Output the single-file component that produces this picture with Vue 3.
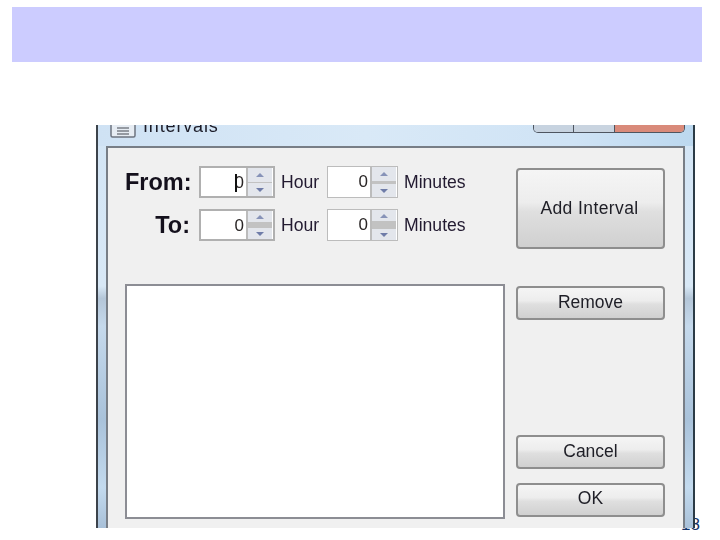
<script setup>
const rows = [
  { label: 'From:', focused: true },
  { label: 'To:', focused: false },
]
</script>

<template>
  <div class="slide">
    <div class="banner"></div>
    <span class="page-no">18</span>
    <div class="window">
      <div class="titlebar">
        <div class="title-left">
          <svg class="app-icon" width="26" height="13" viewBox="0 0 26 13">
            <path d="M1 0V10.5Q1 12 2.5 12H23.5Q25 12 25 10.5V0" fill="#e6ecf3" stroke="#6d7480" stroke-width="1.5"/>
            <path d="M7 3H19M7 6H19M7 9H19" stroke="#7b7f88" stroke-width="1.4"/>
          </svg>
          <span class="title">Intervals</span>
        </div>
        <div class="caption">
          <span class="cap cap-min"></span>
          <span class="cap cap-max"></span>
          <span class="cap cap-close"></span>
        </div>
      </div>
      <div class="content">
        <div class="left">
          <div v-for="row in rows" :key="row.label" class="row">
            <span class="big">{{ row.label }}</span>
            <div class="spinner spinner-hour">
              <div class="value">
                <i v-if="row.focused" class="caret"></i>0
              </div>
              <div class="spin" :class="{ bar: !row.focused }">
                <span class="up"></span>
                <span class="down"></span>
              </div>
            </div>
            <span class="unit unit-hour">Hour</span>
            <div class="spinner spinner-min">
              <div class="value">0</div>
              <div class="spin" :class="{ bar: !row.focused }">
                <span class="up"></span>
                <span class="down"></span>
              </div>
            </div>
            <span class="unit">Minutes</span>
          </div>
          <div class="list"></div>
        </div>
        <div class="right">
          <button class="btn btn-add">Add Interval</button>
          <button class="btn btn-remove">Remove</button>
          <button class="btn btn-cancel">Cancel</button>
          <button class="btn btn-ok">OK</button>
        </div>
      </div>
    </div>
  </div>
</template>

<style>
html, body { margin: 0; background: #fff; overflow: hidden; }
</style>

<style scoped>
.slide {
  position: relative;
  width: 720px;
  height: 540px;
  overflow: hidden;
  background: #fff;
  font-family: "Liberation Sans", Arial, sans-serif;
}
.banner {
  height: 55px;
  margin: 0 18px 0 12px;
  position: relative;
  top: 7px;
  background: #ccccff;
}
.page-no {
  position: absolute;
  left: 681px;
  top: 516px;
  font-size: 17px;
  line-height: 17px;
  color: #123268;
}
.window {
  position: relative;
  z-index: 1;
  box-sizing: border-box;
  width: 599px;
  height: 403px;
  margin: 70px 0 0 96px;
  padding: 0 8px 0 8px;
  border-left: 2px solid #3c434b;
  border-right: 2px solid #2b3b46;
  background:
    linear-gradient(180deg, #d3e5f5 0, #d8e8f6 40%, #b4c6d8 43%, #c5d9ec 50%, #a9c2da 73%, #c3daee 90%, #a8c0d8 100%);
  display: flex;
  flex-direction: column;
  filter: blur(0.35px);
}
.titlebar {
  height: 21px;
  flex: none;
  margin: 0 -8px;
  padding: 0 8px 0 12px;
  display: flex;
  justify-content: space-between;
  overflow: hidden;
  background: linear-gradient(90deg, #cfe2f4, #d9e9f7 45%, #cfe3f5 80%, #bcd8ef);
}
.title-left { display: flex; align-items: flex-start; gap: 7px; }
.app-icon { flex: none; }
.title {
  margin-top: -10px;
  font-size: 18px;
  line-height: 22px;
  color: #1c1c28;
  letter-spacing: 0.85px;
}
.caption {
  display: flex;
  height: 7px;
  border: solid #4e5560;
  border-width: 0 1px 1px;
  border-radius: 0 0 5px 5px;
  overflow: hidden;
}
.cap { display: block; border-right: 1px solid #4e5560; }
.cap-min { width: 39px; background: #c7d3e0; }
.cap-max { width: 40px; background: #c9d4e0; }
.cap-close { width: 69px; border-right: 0; background: #d98a7a; }
.content {
  flex: 1;
  min-height: 0;
  box-sizing: border-box;
  display: flex;
  gap: 11px;
  padding: 18px 0 0 17px;
  background: #f0f0f0;
  border: solid #787e86;
  border-width: 2px 2px 0;
}
.left { width: 380px; flex: none; }
.row {
  display: flex;
  align-items: center;
  height: 32px;
  margin-bottom: 11px;
}
.big {
  box-sizing: border-box;
  width: 65px;
  margin-right: 9px;
  text-align: right;
  font-weight: 700;
  font-size: 23.5px;
  color: #14101c;
  white-space: nowrap;
}
.spinner {
  box-sizing: border-box;
  display: flex;
  height: 32px;
  flex: none;
  background: #fff;
  border: 2px solid #b0b0b0;
  padding: 0 1px 0 0;
}
.spinner-hour { width: 76px; }
.spinner-min { width: 71px; border-width: 1px; border-color: #bcbcbc; }
.value {
  position: relative;
  flex: 1;
  text-align: right;
  font-size: 17px;
  line-height: 30px;
  color: #2a2626;
}
.caret {
  position: absolute;
  right: 7px;
  top: 6px;
  width: 2px;
  height: 18px;
  background: #111;
}
.spin {
  width: 24px;
  margin-left: 2px;
  flex: none;
  display: flex;
  flex-direction: column;
  justify-content: space-between;
  background: #c2c2c2;
  border-left: 2px solid #bcbcbc;
}
.up, .down {
  display: flex;
  align-items: center;
  justify-content: center;
  height: 13px;
  background: #e3e6ec;
}
.up { height: 14px; }
.spin.bar .up { height: 11px; }
.spin.bar .down { height: 11px; }
.up::before {
  content: "";
  border: solid transparent;
  border-width: 0 4px 4px;
  border-bottom-color: #8793b8;
}
.down::before {
  content: "";
  border: solid transparent;
  border-width: 4px 4px 0;
  border-top-color: #6f7ca8;
}
.unit {
  font-size: 17.6px;
  color: #221a30;
  margin-left: 6px;
  white-space: nowrap;
}
.unit-hour { width: 46px; flex: none; }
.list {
  box-sizing: border-box;
  height: 235px;
  margin-top: 43px;
  background: #fff;
  border: 2px solid #8c8d94;
}
.right {
  width: 149px;
  flex: none;
  display: flex;
  flex-direction: column;
  height: 349px;
  margin-top: 2px;
}
.btn {
  box-sizing: border-box;
  display: block;
  width: 149px;
  height: 34px;
  flex: none;
  margin: 0;
  padding: 0;
  border: 2px solid #8e8e8e;
  border-radius: 4px;
  font-family: inherit;
  font-size: 17.5px;
  color: #1e1e26;
  background: linear-gradient(180deg, #f5f5f5 0, #ededed 42%, #dfdfdf 54%, #d0d0d0 100%);
}
.btn-add { height: 81px; letter-spacing: 0.4px; padding-right: 2px; }
.btn-remove { margin-top: 37px; padding-bottom: 2px; }
.btn-cancel { margin-top: auto; padding-bottom: 2px; }
.btn-ok { margin-top: 14px; padding-bottom: 4px; }
</style>
